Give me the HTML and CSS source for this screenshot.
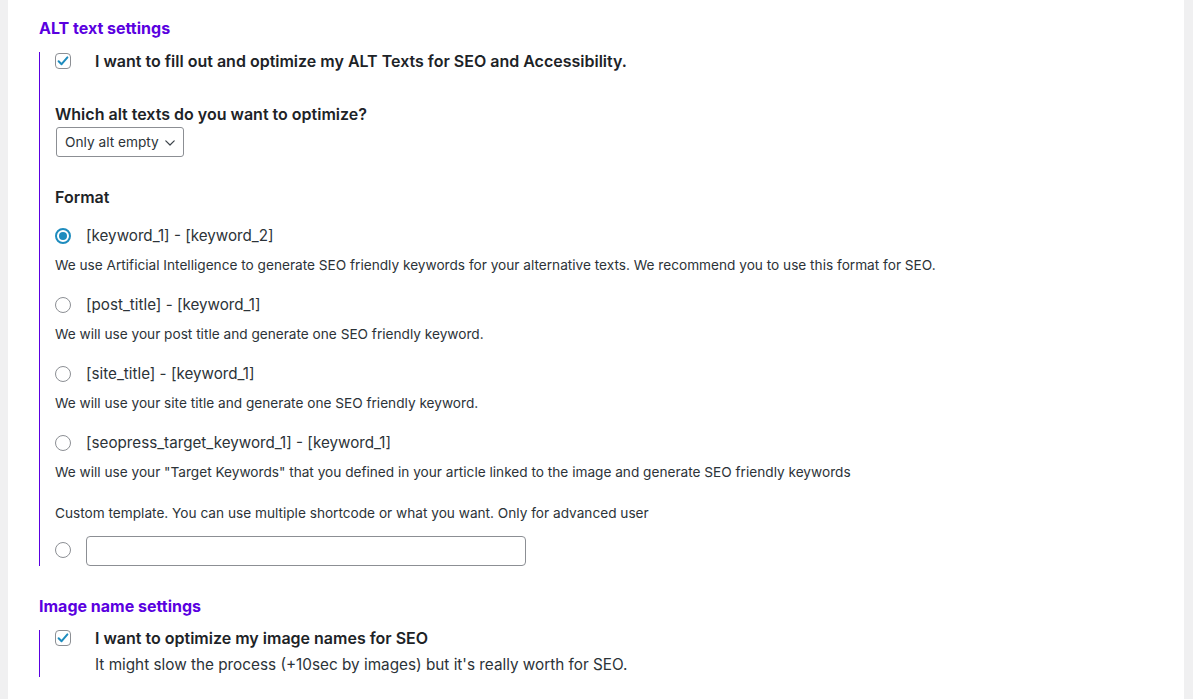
FILE: index.html
```html
<!DOCTYPE html>
<html lang="en">
<head>
<meta charset="utf-8">
<title>ALT text settings</title>
<link rel="stylesheet" href="styles.css">
</head>
<body>
<div class="panel">
  <h2 class="sec-title first">ALT text settings</h2>
  <div class="group">
    <div class="check-row">
      <span class="checkbox checked"><svg viewBox="0 0 16 16" width="16" height="16"><path d="M3.6 8.2 L6.6 11.2 L12.4 4.4" fill="none" stroke="#1e8cbe" stroke-width="2" stroke-linecap="round" stroke-linejoin="round"/></svg></span>
      <span class="check-label">I want to fill out and optimize my ALT Texts for SEO and Accessibility.</span>
    </div>

    <p class="field-label which">Which alt texts do you want to optimize?</p>
    <div class="select">
      <span class="select-text">Only alt empty</span>
      <svg class="chev" viewBox="0 0 10 6" width="10" height="6"><path d="M0.8 0.8 L5 5 L9.2 0.8" fill="none" stroke="#3c434a" stroke-width="1.2" stroke-linecap="round" stroke-linejoin="round"/></svg>
    </div>

    <p class="field-label format">Format</p>

    <div class="option">
      <div class="radio-row"><span class="radio on"></span><span class="radio-label">[keyword_1] - [keyword_2]</span></div>
      <p class="desc">We use Artificial Intelligence to generate SEO friendly keywords for your alternative texts. We recommend you to use this format for SEO.</p>
    </div>
    <div class="option">
      <div class="radio-row"><span class="radio"></span><span class="radio-label">[post_title] - [keyword_1]</span></div>
      <p class="desc">We will use your post title and generate one SEO friendly keyword.</p>
    </div>
    <div class="option">
      <div class="radio-row"><span class="radio"></span><span class="radio-label">[site_title] - [keyword_1]</span></div>
      <p class="desc">We will use your site title and generate one SEO friendly keyword.</p>
    </div>
    <div class="option">
      <div class="radio-row"><span class="radio"></span><span class="radio-label">[seopress_target_keyword_1] - [keyword_1]</span></div>
      <p class="desc">We will use your "Target Keywords" that you defined in your article linked to the image and generate SEO friendly keywords</p>
    </div>

    <p class="desc custom">Custom template. You can use multiple shortcode or what you want. Only for advanced user</p>
    <div class="custom-row">
      <span class="radio"></span>
      <span class="text-input"></span>
    </div>
  </div>

  <h2 class="sec-title second">Image name settings</h2>
  <div class="group group2">
    <div class="check-row top">
      <span class="checkbox checked"><svg viewBox="0 0 16 16" width="16" height="16"><path d="M3.6 8.2 L6.6 11.2 L12.4 4.4" fill="none" stroke="#1e8cbe" stroke-width="2" stroke-linecap="round" stroke-linejoin="round"/></svg></span>
      <div class="check-text">
        <span class="check-label">I want to optimize my image names for SEO</span>
        <span class="check-desc">It might slow the process (+10sec by images) but it's really worth for SEO.</span>
      </div>
    </div>
  </div>
</div>
</body>
</html>
```

FILE: styles.css
```css
* { box-sizing: border-box; }

html, body {
  margin: 0;
  padding: 0;
  background: #f0f0f1;
}

body {
  font-family: Inter, "Noto Sans", "Liberation Sans", sans-serif;
  color: #1d2327;
}

.panel {
  margin: 0 9px 0 8px;
  background: #ffffff;
  height: 699px;
  padding: 18px 0 0 31px;
  overflow: hidden;
}

.sec-title {
  margin: 0;
  font-size: 16px;
  line-height: 20px;
  font-weight: 700;
  color: #5a00e0;
}

.sec-title.first { margin-bottom: 14px; }
.sec-title.second { margin-top: 30px; margin-bottom: 14px; }

.group {
  border-left: 1px solid #5a00e0;
  padding: 1px 0 0 15px;
}

.group.group2 {
  padding-top: 0;
}

.check-row {
  display: flex;
  align-items: center;
  gap: 24px;
  height: 16px;
}

.check-row.top {
  align-items: flex-start;
  height: auto;
}

.checkbox {
  width: 16px;
  height: 16px;
  flex: none;
  border: 1px solid #8c8f94;
  border-radius: 4px;
  background: #fff;
  position: relative;
}

.checkbox svg {
  position: absolute;
  left: -1px;
  top: -1px;
}

.check-label {
  font-size: 16px;
  font-weight: 600;
  line-height: 16px;
  color: #1d2327;
  white-space: nowrap;
}

.check-text {
  display: flex;
  flex-direction: column;
}

.check-desc {
  margin-top: 11px;
  font-size: 15.3px;
  line-height: 16px;
  color: #2c3338;
  padding-bottom: 4px;
  white-space: nowrap;
}

.field-label {
  margin: 0;
  font-size: 16px;
  line-height: 20px;
  font-weight: 600;
  color: #1d2327;
}

.field-label.which { margin-top: 35px; margin-bottom: 3px; }
.field-label.format { margin-top: 30px; margin-bottom: 17px; }

.select {
  display: flex;
  align-items: center;
  justify-content: space-between;
  height: 30px;
  width: 128px;
  padding: 0 8px 0 8px;
  border: 1px solid #8c8f94;
  border-radius: 3px;
  font-size: 13.7px;
  color: #2c3338;
  background: #fff;
  margin-left: 1px;
}

.select-text { white-space: nowrap; }

.chev { margin-top: 1px; flex: none; }

.option {
  margin-bottom: 18px;
}

.radio-row {
  display: flex;
  align-items: center;
  gap: 15px;
  height: 24px;
}

.radio {
  width: 16px;
  height: 16px;
  flex: none;
  border: 1px solid #8c8f94;
  border-radius: 50%;
  background: #fff;
  position: relative;
}

.radio.on {
  border-color: #1e8cbe;
  border-width: 2px;
}

.radio.on::after {
  content: "";
  position: absolute;
  left: 2px;
  top: 2px;
  width: 8px;
  height: 8px;
  border-radius: 50%;
  background: #1e8cbe;
}

.radio-label {
  font-size: 15.2px;
  line-height: 24px;
  color: #2c3338;
  white-space: nowrap;
}

.desc {
  margin: 7px 0 0 0;
  font-size: 13.65px;
  line-height: 20px;
  color: #2c3338;
  white-space: nowrap;
}

.desc.custom {
  margin-top: 21px;
}

.custom-row {
  display: flex;
  align-items: center;
  gap: 15px;
  margin-top: 13px;
}

.custom-row .radio { margin-top: -2px; }

.text-input {
  display: block;
  width: 440px;
  height: 30px;
  border: 1px solid #8c8f94;
  border-radius: 4px;
  background: #fff;
}
```
